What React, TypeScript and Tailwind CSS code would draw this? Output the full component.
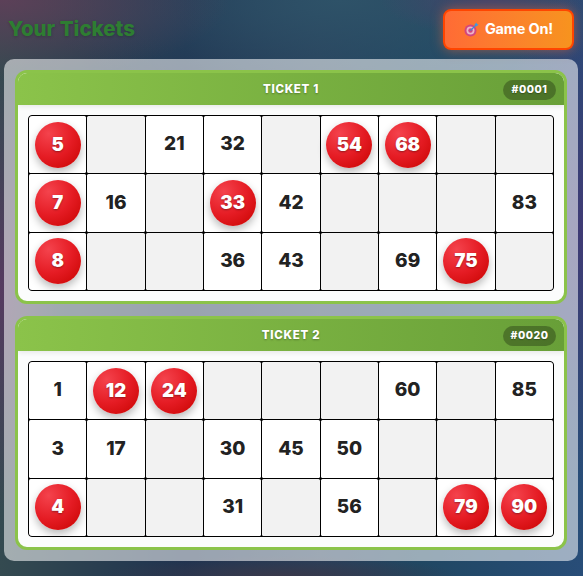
const font = { fontFamily: '"Inter", "Liberation Sans", sans-serif' };

type Cell = { n: number | null; hit?: boolean };
const t1: Cell[][] = [
  [{ n: 5, hit: true }, { n: null }, { n: 21 }, { n: 32 }, { n: null }, { n: 54, hit: true }, { n: 68, hit: true }, { n: null }, { n: null }],
  [{ n: 7, hit: true }, { n: 16 }, { n: null }, { n: 33, hit: true }, { n: 42 }, { n: null }, { n: null }, { n: null }, { n: 83 }],
  [{ n: 8, hit: true }, { n: null }, { n: null }, { n: 36 }, { n: 43 }, { n: null }, { n: 69 }, { n: 75, hit: true }, { n: null }],
];
const t2: Cell[][] = [
  [{ n: 1 }, { n: 12, hit: true }, { n: 24, hit: true }, { n: null }, { n: null }, { n: null }, { n: 60 }, { n: null }, { n: 85 }],
  [{ n: 3 }, { n: 17 }, { n: null }, { n: 30 }, { n: 45 }, { n: 50 }, { n: null }, { n: null }, { n: null }],
  [{ n: 4, hit: true }, { n: null }, { n: null }, { n: 31 }, { n: null }, { n: 56 }, { n: null }, { n: 79, hit: true }, { n: 90, hit: true }],
];

function Ticket({ title, id, rows }: { title: string; id: string; rows: Cell[][] }) {
  return (
    <div className="rounded-[12px] border-[3px] border-[#8bc34a] bg-[#fbfcfc] overflow-hidden">
      <div className="relative h-[32px] pt-[1px] flex items-center justify-center rounded-t-[8px] bg-gradient-to-r from-[#8bc34a] to-[#689f38] shadow-[0_2px_5px_rgba(0,0,0,0.08)]">
        <span className="text-[11.5px] font-extrabold tracking-[0.7px] text-white [text-shadow:0_1px_2px_rgba(0,0,0,0.3)]">{title}</span>
        <span className="absolute right-[8px] top-[7px] h-[20px] w-[53px] flex items-center justify-center rounded-full bg-[rgba(0,0,0,0.28)] text-[10.5px] font-extrabold tracking-[0.5px] text-white [text-shadow:0_1px_1px_rgba(0,0,0,0.3)]">{id}</span>
      </div>
      <div className="p-[10px]">
        <div className="grid grid-cols-9 border border-black rounded-[4px] overflow-hidden bg-black gap-px">
          {rows.flat().map((c, i) => (
            <div key={i} className={`h-[57.33px] flex items-center justify-center rounded-[1.5px] ${c.n === null ? "bg-[#f2f2f2]" : "bg-white"}`}>
              {c.n !== null && (c.hit ? (
                <div className="w-[46px] h-[46px] rounded-full flex items-center justify-center text-[18.5px] font-black text-white bg-[radial-gradient(circle_at_30%_25%,#f4434d,#e51c24_50%,#d00a0a_85%)] shadow-[0_4px_8px_rgba(0,0,0,0.28)] [text-shadow:0_1px_2px_rgba(0,0,0,0.35)]">{c.n}</div>
              ) : (
                <span className="text-[19px] font-extrabold text-[#222]">{c.n}</span>
              ))}
            </div>
          ))}
        </div>
      </div>
    </div>
  );
}

export default function App() {
  return (
    <div
      style={font}
      className="w-[583px] h-[576px] overflow-hidden bg-[radial-gradient(ellipse_60px_220px_at_0px_290px,#563a60,transparent),radial-gradient(ellipse_90px_250px_at_583px_230px,#3f3a74,transparent),radial-gradient(ellipse_230px_80px_at_0px_0px,#5c4058,transparent),radial-gradient(ellipse_110px_36px_at_490px_0px,#45456a,transparent),radial-gradient(ellipse_180px_20px_at_280px_576px,#38384a,transparent),radial-gradient(ellipse_300px_110px_at_340px_0px,#2e5268,transparent),linear-gradient(90deg,#344a50_0%,#1f3350_32%,#28405c_55%,#204762_72%,#284d78_100%)]"
    >
      <div className="h-[59px] flex items-center justify-between pl-[8px] pr-[9px]">
        <h2 className="text-[20.5px] font-extrabold text-[#2e7d32] [text-shadow:0_1px_3px_rgba(0,0,0,0.2)]">Your Tickets</h2>
        <button className="w-[131px] h-[41px] -mt-[1px] flex items-center justify-center gap-[6px] rounded-[8px] border-[2px] border-[#ff4500] bg-gradient-to-r from-[#ff6b35] to-[#f7931e] text-[14.5px] font-bold tracking-[-0.2px] text-white shadow-[0_0_12px_rgba(255,107,53,0.5)]">
          <svg width="15" height="15" viewBox="0 0 15 15">
            <circle cx="6.5" cy="8.5" r="6" fill="#d2467e" />
            <circle cx="6.5" cy="8.5" r="4" fill="#eeb4c8" />
            <circle cx="6.5" cy="8.5" r="2.2" fill="#d2467e" />
            <path d="M6.5 8.5 L12 3" stroke="#3f86d8" strokeWidth="1.3" />
            <path d="M10.5 2.5 L12.5 0.5 L13 2 L14.5 2.5 L12.5 4.5 Z" fill="#3f9ae0" />
          </svg>
          <span>Game On!</span>
        </button>
      </div>
      <div className="ml-[4px] w-[574px] h-[502px] rounded-[10px] bg-[rgba(255,255,255,0.55)] pt-[11px] px-[11px] flex flex-col gap-[12px]">
        <Ticket title="TICKET 1" id="#0001" rows={t1} />
        <Ticket title="TICKET 2" id="#0020" rows={t2} />
      </div>
    </div>
  );
}
